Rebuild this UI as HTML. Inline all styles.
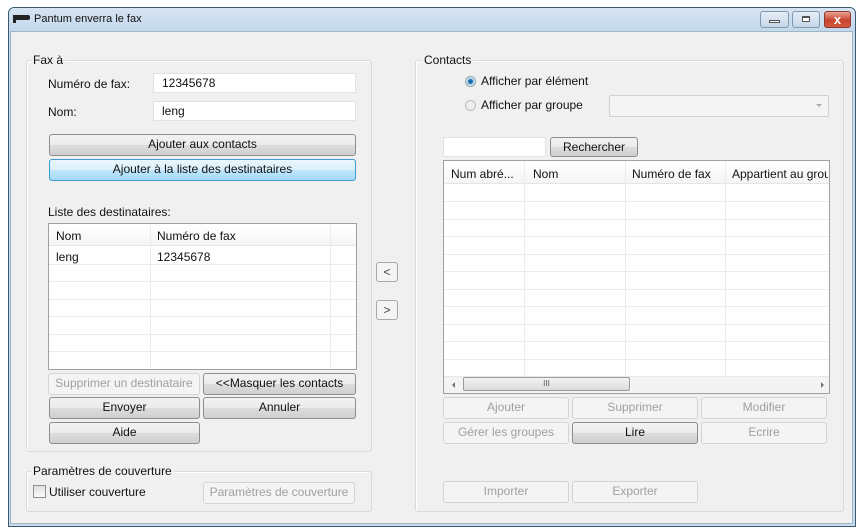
<!DOCTYPE html>
<html><head><meta charset="utf-8"><style>
*{box-sizing:border-box;margin:0;padding:0}
body{width:862px;height:531px;background:#fff;position:relative;overflow:hidden;font-family:"Liberation Sans",sans-serif;font-size:12px;color:#111}
.a{position:absolute}
.win{left:8px;top:7px;width:848px;height:520px;border:1px solid #3b5a6e;border-radius:6px 6px 0 0;background:#c9dbee}
.title{left:9px;top:8px;width:846px;height:24px;background:linear-gradient(#d6e4f2,#c4d8ec);border-radius:5px 5px 0 0}
.content{left:10px;top:31px;width:843px;height:493px;background:#f0f0f0;border:1px solid #9fb5c8}
.grp{border:1px solid #d9d9d9;border-radius:3px;box-shadow:inset 1px 1px 0 #fff}
.lbl{background:#f0f0f0;padding:0 2px;line-height:14px}
.inp{background:#fff;border:1px solid #e2e2e2;padding-left:8px;line-height:18px}
.btn{border:1px solid #8d8d8d;border-radius:3px;background:linear-gradient(#f2f2f2 0,#ebebeb 50%,#dddddd 51%,#cfcfcf);text-align:center;line-height:19px}
.dis{border:1px solid #d4d4d4;background:#f4f4f4;color:#a0a0a0}
.blue{border-color:#3c9ed3;background:linear-gradient(#eaf6fd,#d9f0fc 50%,#bee6fd 51%,#a7d9f5)}
.tbl{background:#fff;border:1px solid #a0a0a0}
.hl{background:#ececec;height:1px}
.vl{background:#ececec;width:1px}
</style></head><body>
<div class="a win"></div>
<div class="a title"></div>
<div class="a" style="left:13px;top:15px;width:17px;height:5px;background:#222;border-radius:0 2px 2px 0"></div>
<div class="a" style="left:13px;top:15px;width:3px;height:8px;background:#222"></div>
<div class="a" style="left:34px;top:13px;font-size:11px">Pantum enverra le fax</div>
<div class="a" style="left:760px;top:11px;width:29px;height:17px;border:1px solid #7f98b0;border-radius:3px;background:linear-gradient(#e5eef7,#c6d6e7)"></div>
<div class="a" style="left:769px;top:20px;width:11px;height:3px;background:#fff;border:1px solid #555"></div>
<div class="a" style="left:792px;top:11px;width:28px;height:17px;border:1px solid #7f98b0;border-radius:3px;background:linear-gradient(#e5eef7,#c6d6e7)"></div>
<div class="a" style="left:802px;top:16px;width:8px;height:6px;background:#fff;border:1px solid #555;border-top-width:2px"></div>
<div class="a" style="left:824px;top:11px;width:27px;height:17px;border:1px solid #8b3a2c;border-radius:3px;background:linear-gradient(#e9a394,#c8452f 55%,#d2583f);color:#fff;font-weight:bold;text-align:center;line-height:15px;font-size:13px">x</div>
<div class="a content"></div>

<!-- Fax a -->
<div class="a grp" style="left:26px;top:60px;width:346px;height:392px"></div>
<div class="a lbl" style="left:31px;top:53px">Fax à</div>
<div class="a" style="left:48px;top:77px">Numéro de fax:</div>
<div class="a inp" style="left:153px;top:73px;width:203px;height:20px">12345678</div>
<div class="a" style="left:48px;top:105px">Nom:</div>
<div class="a inp" style="left:153px;top:101px;width:203px;height:20px">leng</div>
<div class="a btn" style="left:49px;top:134px;width:307px;height:22px">Ajouter aux contacts</div>
<div class="a btn blue" style="left:49px;top:159px;width:307px;height:22px">Ajouter à la liste des destinataires</div>
<div class="a" style="left:48px;top:205px">Liste des destinataires:</div>
<div class="a tbl" style="left:48px;top:223px;width:309px;height:147px"></div>
<div class="a" style="left:49px;top:224px;width:307px;height:22px;background:linear-gradient(#fff,#f5f5f5);border-bottom:1px solid #e5e5e5"></div>
<div class="a vl" style="left:150px;top:224px;height:145px"></div>
<div class="a vl" style="left:330px;top:224px;height:145px"></div>
<div class="a" style="left:56px;top:229px">Nom</div>
<div class="a" style="left:157px;top:229px">Numéro de fax</div>
<div class="a" style="left:56px;top:250px">leng</div>
<div class="a" style="left:157px;top:250px">12345678</div>
<div class="a hl" style="left:49px;top:264px;width:307px"></div>
<div class="a hl" style="left:49px;top:281px;width:307px"></div>
<div class="a hl" style="left:49px;top:299px;width:307px"></div>
<div class="a hl" style="left:49px;top:316px;width:307px"></div>
<div class="a hl" style="left:49px;top:334px;width:307px"></div>
<div class="a hl" style="left:49px;top:351px;width:307px"></div>
<div class="a btn dis" style="left:48px;top:373px;width:152px;height:22px">Supprimer un destinataire</div>
<div class="a btn" style="left:203px;top:373px;width:153px;height:22px">&lt;&lt;Masquer les contacts</div>
<div class="a btn" style="left:49px;top:397px;width:151px;height:22px">Envoyer</div>
<div class="a btn" style="left:203px;top:397px;width:153px;height:22px">Annuler</div>
<div class="a btn" style="left:49px;top:422px;width:151px;height:22px">Aide</div>

<div class="a grp" style="left:26px;top:471px;width:346px;height:41px"></div>
<div class="a lbl" style="left:31px;top:464px">Paramètres de couverture</div>
<div class="a" style="left:33px;top:485px;width:13px;height:13px;border:1px solid #8f8f8f;background:linear-gradient(#e0e0e0,#fafafa)"></div>
<div class="a" style="left:49px;top:485px">Utiliser couverture</div>
<div class="a btn dis" style="left:203px;top:482px;width:152px;height:22px">Paramètres de couverture</div>

<div class="a btn dis" style="left:376px;top:262px;width:22px;height:20px;border-color:#a8a8a8;color:#444">&lt;</div>
<div class="a btn dis" style="left:376px;top:300px;width:22px;height:20px;border-color:#a8a8a8;color:#444">&gt;</div>

<!-- Contacts -->
<div class="a grp" style="left:415px;top:60px;width:429px;height:452px"></div>
<div class="a lbl" style="left:422px;top:53px">Contacts</div>
<div class="a" style="left:465px;top:76px;width:11px;height:11px;border-radius:50%;border:1px solid #8aa;background:radial-gradient(#1b6fa8 30%,#9cc7e3 45%,#eef 70%)"></div>
<div class="a" style="left:481px;top:74px">Afficher par élément</div>
<div class="a" style="left:465px;top:100px;width:11px;height:11px;border-radius:50%;border:1px solid #bbb;background:#eee"></div>
<div class="a" style="left:481px;top:98px">Afficher par groupe</div>
<div class="a" style="left:609px;top:95px;width:220px;height:22px;border:1px solid #d0d0d0;background:#f4f4f4;border-radius:2px"></div>
<div class="a" style="left:816px;top:104px;border:3px solid transparent;border-top:3px solid #aaa"></div>
<div class="a" style="left:443px;top:137px;width:103px;height:20px;background:#fff;border:1px solid #e2e2e2"></div>
<div class="a btn" style="left:550px;top:137px;width:88px;height:20px;line-height:18px">Rechercher</div>
<div class="a tbl" style="left:443px;top:160px;width:387px;height:234px"></div>
<div class="a" style="left:444px;top:161px;width:385px;height:23px;background:linear-gradient(#fff,#f5f5f5);border-bottom:1px solid #e5e5e5"></div>
<div class="a vl" style="left:524px;top:161px;height:215px"></div>
<div class="a vl" style="left:625px;top:161px;height:215px"></div>
<div class="a vl" style="left:725px;top:161px;height:215px"></div>
<div class="a" style="left:451px;top:167px">Num abré...</div>
<div class="a" style="left:533px;top:167px">Nom</div>
<div class="a" style="left:632px;top:167px">Numéro de fax</div>
<div class="a" style="left:732px;top:167px;width:96px;overflow:hidden;white-space:nowrap">Appartient au groupe</div>
<div class="a hl" style="left:444px;top:201px;width:385px"></div>
<div class="a hl" style="left:444px;top:219px;width:385px"></div>
<div class="a hl" style="left:444px;top:236px;width:385px"></div>
<div class="a hl" style="left:444px;top:254px;width:385px"></div>
<div class="a hl" style="left:444px;top:271px;width:385px"></div>
<div class="a hl" style="left:444px;top:289px;width:385px"></div>
<div class="a hl" style="left:444px;top:306px;width:385px"></div>
<div class="a hl" style="left:444px;top:324px;width:385px"></div>
<div class="a hl" style="left:444px;top:341px;width:385px"></div>
<div class="a hl" style="left:444px;top:359px;width:385px"></div>
<div class="a" style="left:444px;top:376px;width:385px;height:17px;background:#f3f3f3;border-top:1px solid #e8e8e8"></div>
<div class="a" style="left:452px;top:382px;border:3px solid transparent;border-right:3px solid #777;border-left:0"></div>
<div class="a" style="left:821px;top:382px;border:3px solid transparent;border-left:3px solid #777;border-right:0"></div>
<div class="a" style="left:463px;top:377px;width:167px;height:14px;border:1px solid #9a9a9a;border-radius:2px;background:linear-gradient(#f3f3f3,#dcdcdc);text-align:center;font-size:8px;line-height:12px;color:#555">III</div>
<div class="a btn dis" style="left:443px;top:397px;width:126px;height:22px">Ajouter</div>
<div class="a btn dis" style="left:572px;top:397px;width:126px;height:22px">Supprimer</div>
<div class="a btn dis" style="left:701px;top:397px;width:126px;height:22px">Modifier</div>
<div class="a btn dis" style="left:443px;top:422px;width:126px;height:22px">Gérer les groupes</div>
<div class="a btn" style="left:572px;top:422px;width:126px;height:22px">Lire</div>
<div class="a btn dis" style="left:701px;top:422px;width:126px;height:22px">Ecrire</div>
<div class="a btn dis" style="left:443px;top:481px;width:126px;height:22px">Importer</div>
<div class="a btn dis" style="left:572px;top:481px;width:126px;height:22px">Exporter</div>
</body></html>
